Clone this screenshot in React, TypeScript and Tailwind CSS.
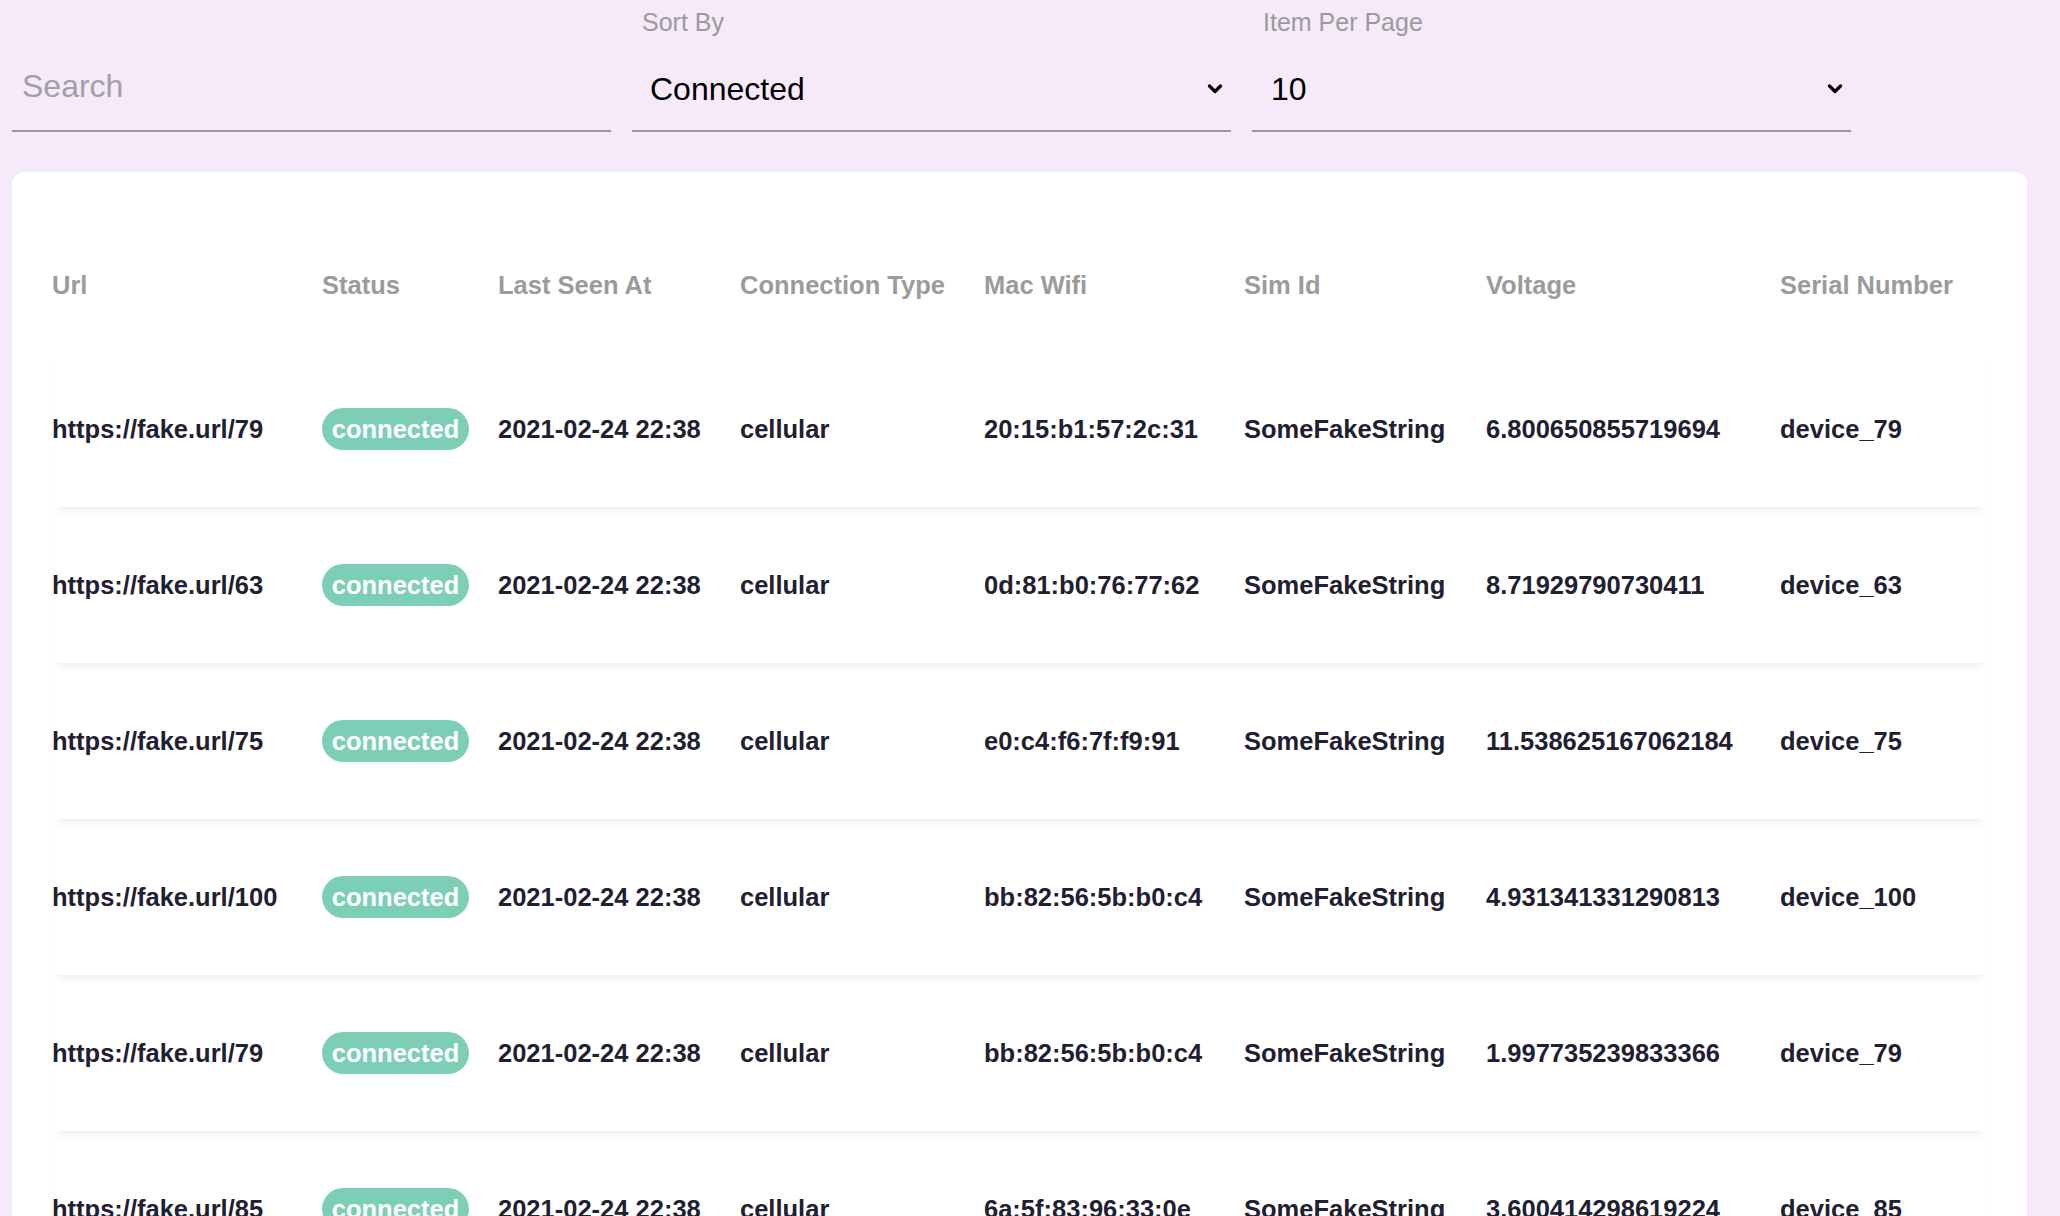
import React from 'react';

type Device = {
  url: string;
  mac: string;
  voltage: string;
  serial: string;
};

const devices: Device[] = [
  { url: 'https://fake.url/79', mac: '20:15:b1:57:2c:31', voltage: '6.800650855719694', serial: 'device_79' },
  { url: 'https://fake.url/63', mac: '0d:81:b0:76:77:62', voltage: '8.71929790730411', serial: 'device_63' },
  { url: 'https://fake.url/75', mac: 'e0:c4:f6:7f:f9:91', voltage: '11.538625167062184', serial: 'device_75' },
  { url: 'https://fake.url/100', mac: 'bb:82:56:5b:b0:c4', voltage: '4.931341331290813', serial: 'device_100' },
  { url: 'https://fake.url/79', mac: 'bb:82:56:5b:b0:c4', voltage: '1.997735239833366', serial: 'device_79' },
  { url: 'https://fake.url/85', mac: '6a:5f:83:96:33:0e', voltage: '3.600414298619224', serial: 'device_85' },
];

const headers = ['Url', 'Status', 'Last Seen At', 'Connection Type', 'Mac Wifi', 'Sim Id', 'Voltage', 'Serial Number'];

const cols = 'grid grid-cols-[270px_176px_242px_244px_260px_242px_294px_1fr] items-center';

const Chevron: React.FC = () => (
  <svg width="16" height="10" viewBox="0 0 16 10" fill="none" className="shrink-0">
    <path d="M2.5 2 L8 7.5 L13.5 2" stroke="#000" strokeWidth="3.2" strokeLinecap="round" strokeLinejoin="round" />
  </svg>
);

const SelectField: React.FC<{ label: string; value: string; labelPad: string; valuePad: string }> = ({
  label,
  value,
  labelPad,
  valuePad,
}) => (
  <div className="w-[599px] h-[132px] border-b-2 border-[#9a969c] flex flex-col pt-[8px]">
    <div className={`${labelPad} text-[25px] leading-[28px] text-[#9b9b9b]`}>{label}</div>
    <div className={`mt-[35px] flex items-center justify-between ${valuePad} pr-[8px]`}>
      <span className="text-[32px] leading-[36px] text-black">{value}</span>
      <Chevron />
    </div>
  </div>
);

const StatusBadge: React.FC = () => (
  <span className="inline-flex w-[147px] h-[42px] items-center justify-center rounded-full bg-[#7ccfb6] text-white">
    connected
  </span>
);

export default function App() {
  return (
    <div className="min-h-screen bg-[#f5e9fa] pl-[12px] pr-[33px] font-['Liberation_Sans',Arial,sans-serif]">
      <div className="flex gap-[21px]">
        <div className="w-[599px] h-[132px] border-b-2 border-[#9a969c] flex flex-col pt-[68px] pl-[10px]">
          <span className="text-[32px] leading-[36px] text-[#a3a0a5]">Search</span>
        </div>
        <SelectField label="Sort By" value="Connected" labelPad="pl-[10px]" valuePad="pl-[18px]" />
        <SelectField label="Item Per Page" value="10" labelPad="pl-[11px]" valuePad="pl-[19px]" />
      </div>

      <div className="mt-[40px] bg-white rounded-[12px] px-[40px] pt-[47px] pb-[40px]">
        <div className={`${cols} h-[132px] text-[25.5px] font-bold text-[#9b9b9b]`}>
          {headers.map((h) => (
            <div key={h} className="whitespace-nowrap">
              {h}
            </div>
          ))}
        </div>

        {devices.map((d, i) => (
          <div
            key={i}
            className={`${cols} h-[156px] shadow-[0_7px_9px_-5px_rgba(0,0,0,0.09),0_0_1px_rgba(0,0,0,0.03)] text-[25.5px] font-bold text-[#1f2031] whitespace-nowrap`}
          >
            <div>{d.url}</div>
            <div>
              <StatusBadge />
            </div>
            <div>2021-02-24 22:38</div>
            <div>cellular</div>
            <div>{d.mac}</div>
            <div>SomeFakeString</div>
            <div>{d.voltage}</div>
            <div>{d.serial}</div>
          </div>
        ))}
      </div>
    </div>
  );
}
